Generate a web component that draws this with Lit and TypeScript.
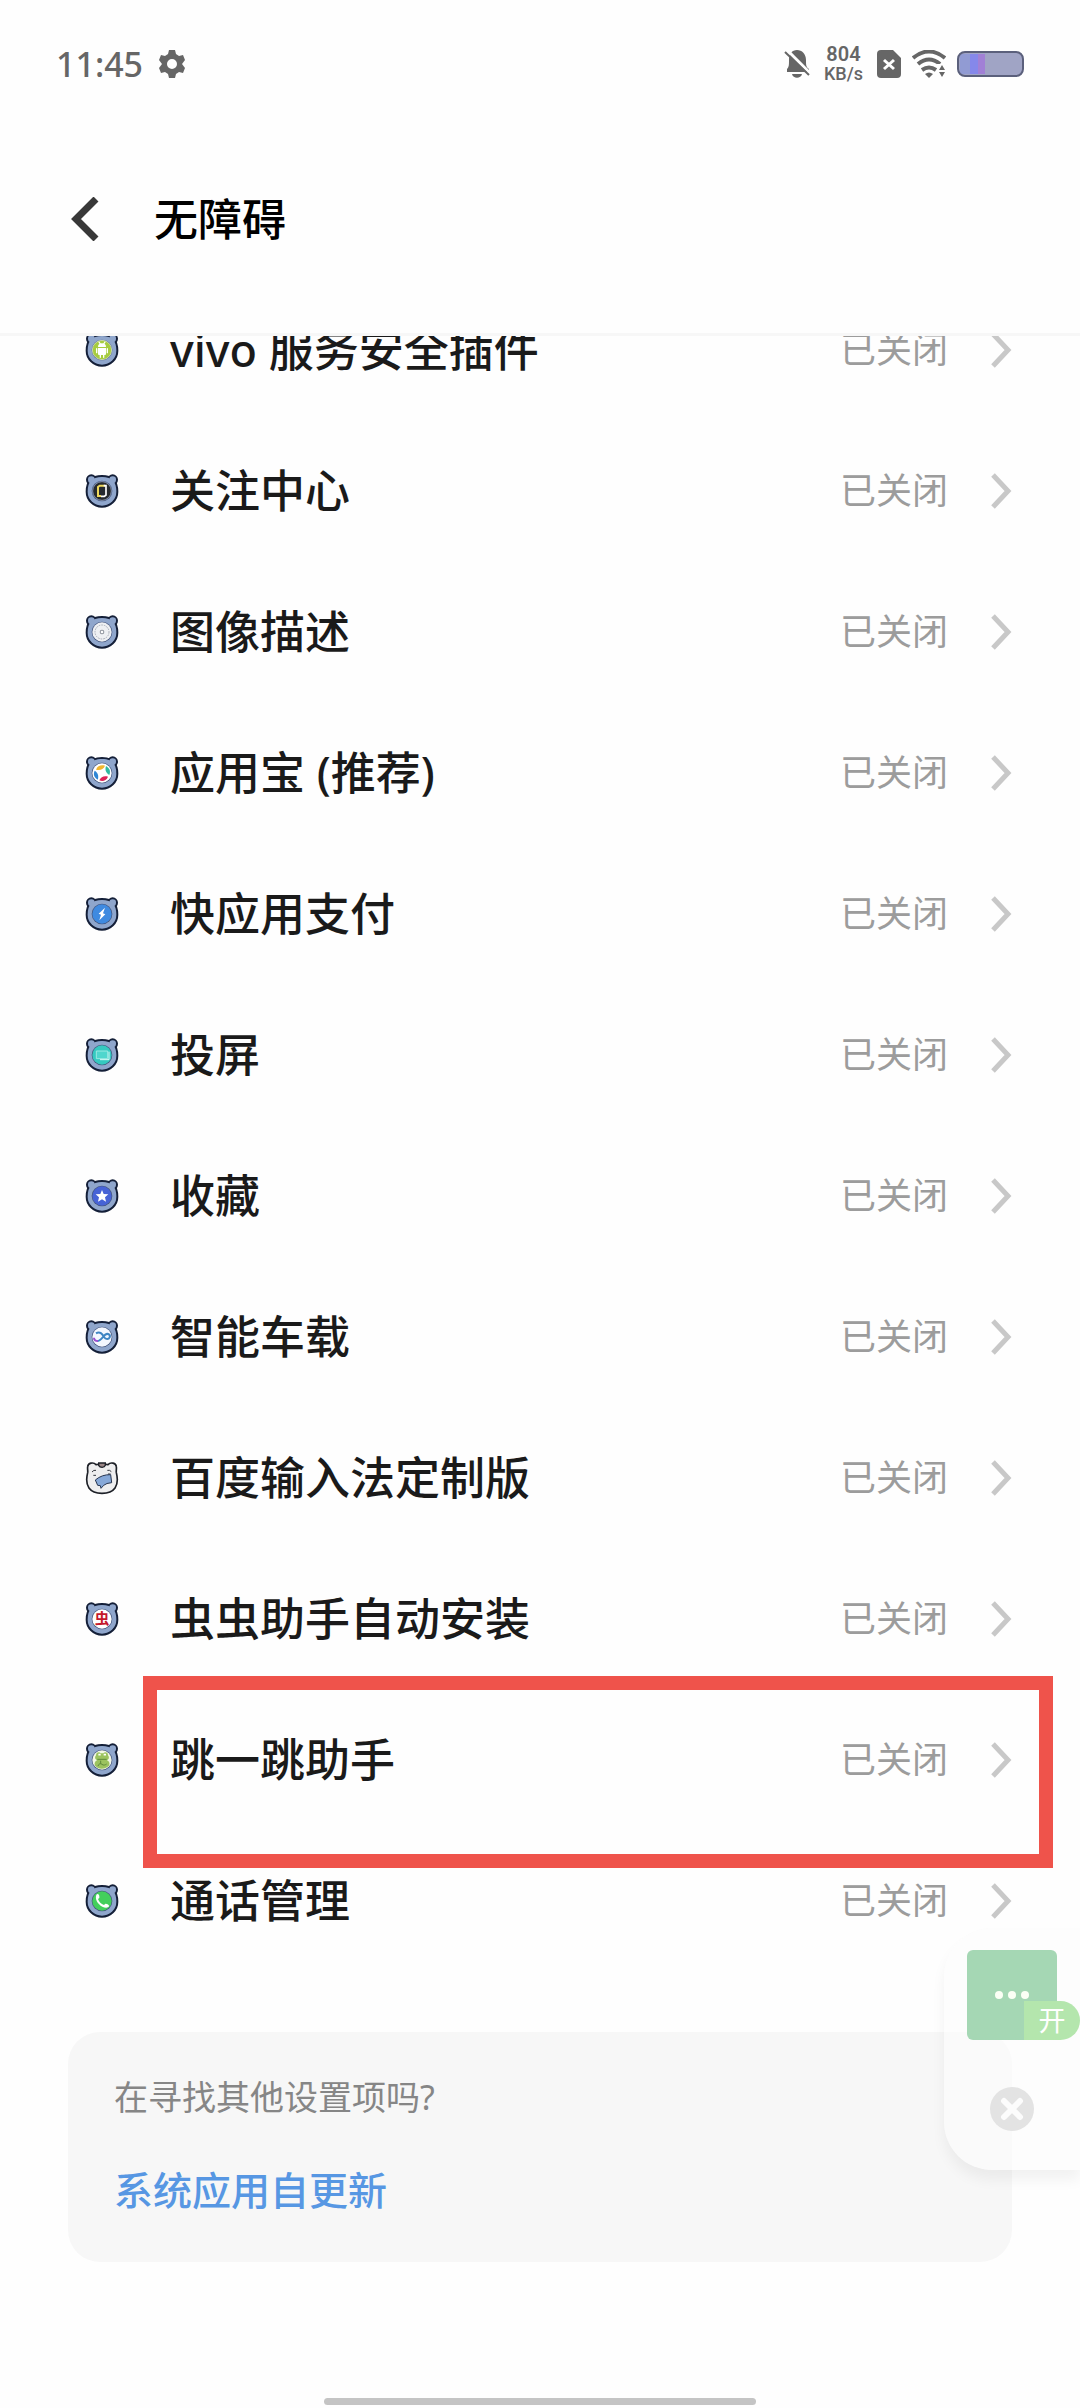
import { LitElement, html, css, svg } from 'lit';
import { customElement, property } from 'lit/decorators.js';

const ICONS: Record<string, unknown> = {
  android: svg`
    <circle cx="48" cy="48" r="29" fill="#a6cc3e" stroke="#eef6d8" stroke-width="2" />
    <path d="M36 39a12 11 0 0 1 24 0zM36 42h24v18a3 3 0 0 1-3 3H39a3 3 0 0 1-3-3z" fill="#fff" />
    <path d="M32 44v12M64 44v12M43 62v8M53 62v8M39 24l4 6M57 24l-4 6" stroke="#fff" stroke-width="4" stroke-linecap="round" />`,
  focus: svg`
    <circle cx="48" cy="48" r="28" fill="#262a2e" stroke="#aab6cf" stroke-width="2" />
    <path d="M45 63H36V36l5-4h16" fill="none" stroke="#f0d95c" stroke-width="6" />
    <path d="M53 32h7v28l-5 4H45" fill="none" stroke="#fff" stroke-width="5" />`,
  image: svg`
    <circle cx="48" cy="48" r="29" fill="#eef0f3" />
    <circle cx="48" cy="48" r="21" fill="none" stroke="#a9aeb8" stroke-width="3" stroke-dasharray="5 3" />
    <rect x="43" y="43" width="10" height="10" rx="2" fill="#fff" stroke="#8d929c" stroke-width="3" />`,
  store: svg`
    <circle cx="48" cy="48" r="29" fill="#fff" />
    <path d="M30 38c5-13 16-15 27-12-5 12-15 15-27 12z" fill="#f2b62f" />
    <path d="M60 27c12 7 14 17 10 27-10-6-14-15-10-27z" fill="#2fb9a0" />
    <path d="M66 59c-5 12-16 15-26 11 5-11 15-15 26-11z" fill="#dd2457" />
    <path d="M35 68c-11-7-14-17-9-27 10 6 13 16 9 27z" fill="#2e86d6" />`,
  quick: svg`
    <circle cx="48" cy="48" r="29" fill="#3f8ae0" />
    <path d="M57 29 38 47l7 3-5 17 18-18-7-3z" fill="#fff" />`,
  cast: svg`
    <circle cx="48" cy="48" r="29" fill="#35c9c0" />
    <path d="M31 36h34v23H31z" fill="#4fd6cd" stroke="#9be9e3" stroke-width="3" />
    <path d="M42 62h27V38" fill="none" stroke="#d9fbf7" stroke-width="3" />`,
  star: svg`
    <circle cx="48" cy="48" r="29" fill="#4763d6" />
    <path d="m48 30 5 12 14 1-10 9 3 13-12-7-12 7 3-13-10-9 14-1z" fill="#fff" />`,
  car: svg`
    <circle cx="48" cy="48" r="29" fill="#f4f8ff" />
    <path d="M30 37c12-8 19 3 24 11s14 8 17 1-5-14-13-8-14 19-24 19" fill="none" stroke="#3f86c4" stroke-width="6" />
    <path d="M36 60c-7 0-12-4-12-10" fill="none" stroke="#9a4fd0" stroke-width="6" />`,
  worm: svg`
    <circle cx="48" cy="48" r="29" fill="#fff" />
    <text x="48" y="64" text-anchor="middle" font-size="44" font-weight="700" fill="#c4182c">虫</text>`,
  frog: svg`
    <circle cx="48" cy="48" r="29" fill="#f3f8e6" />
    <path d="M30 34c0-9 10-12 14-6h8c5-6 15-2 14 6 5 6 3 12-3 15 8 4 9 10 6 16-12 12-32 12-42 0-3-6-1-12 6-16-6-3-8-9-3-15z" fill="#9cc35f" />
    <path d="M34 46h28M44 50v9M36 66c2-7 8-9 12-5s10 2 14-1" fill="none" stroke="#5f8a3c" stroke-width="3" />
    <path d="M37 32h7M53 32h7" stroke="#fff" stroke-width="5" />`,
  phone: svg`
    <circle cx="48" cy="48" r="29" fill="#43cf5c" />
    <path d="M31 29c4-4 8-1 9 4v6l-4 3c3 9 9 15 18 18l4-4c8 1 12 4 11 8-4 6-12 5-20 1C35 57 26 42 31 29z" fill="#fff" />`,
};

const SERVICES = [
  { name: 'vivo 服务安全插件', icon: 'android' },
  { name: '关注中心', icon: 'focus' },
  { name: '图像描述', icon: 'image' },
  { name: '应用宝 (推荐)', icon: 'store' },
  { name: '快应用支付', icon: 'quick' },
  { name: '投屏', icon: 'cast' },
  { name: '收藏', icon: 'star' },
  { name: '智能车载', icon: 'car' },
  { name: '百度输入法定制版', icon: 'baidu' },
  { name: '虫虫助手自动安装', icon: 'worm' },
  { name: '跳一跳助手', icon: 'frog', marked: true },
  { name: '通话管理', icon: 'phone' },
];

@customElement('bear-icon')
export class BearIcon extends LitElement {
  @property() name = '';

  static styles = css`
    :host {
      display: block;
      width: 34px;
      height: 34px;
    }

    svg {
      display: block;
      width: 100%;
      height: 100%;
      font-family: 'Noto Sans CJK SC', sans-serif;
    }
  `;

  render() {
    if (this.name === 'baidu') {
      return html`
        <svg viewBox="-3 -3 102 102" aria-hidden="true">
          <path
            d="M5 14C6 3 22-1 30 8q18-4 36 0c8-9 24-5 25 6 1 7-1 12 0 18 10 40-6 62-43 62S-5 72 5 32c1-6-1-11 0-18z"
            fill="#eeeeef" stroke="#1d2027" stroke-width="5"
          />
          <path d="M38 3h20v7c-3 8-16 8-20 0z" fill="#9b8787" stroke="#1d2027" stroke-width="4" />
          <path d="M18 30q5-7 12-5M64 25q7-2 12 4M22 40h8M66 36h8" fill="none" stroke="#33363d" stroke-width="3" />
          <path
            d="M28 54q20-17 46-16l3 24q-16 1-24 8l-8 9-2-8-8-1z"
            fill="#86a8d8" stroke="#26344f" stroke-width="3"
          />
        </svg>
      `;
    }
    return html`
      <svg viewBox="-3 -3 102 102" aria-hidden="true">
        <g fill="#8fa6cc" stroke="#141f38" stroke-width="8">
          <circle cx="16" cy="14" r="12" />
          <circle cx="80" cy="14" r="12" />
          <path d="M3 50C3 20 16 4 48 4s45 16 45 46a45 44 0 0 1-90 0z" />
        </g>
        <g fill="#8fa6cc">
          <circle cx="16" cy="14" r="10" />
          <circle cx="80" cy="14" r="10" />
          <path d="M5 50C5 21 17 6 48 6s43 15 43 44a43 42 0 0 1-86 0z" />
        </g>
        <circle cx="48" cy="48" r="31" fill="#44557c" />
        ${ICONS[this.name]}
      </svg>
    `;
  }
}

@customElement('status-bar')
export class StatusBar extends LitElement {
  static styles = css`
    :host {
      display: flex;
      align-items: center;
      justify-content: space-between;
      height: 128px;
      padding: 0 56px;
      color: #666;
      font-family: 'Noto Sans', sans-serif;
      font-weight: 500;
    }

    .left,
    .right {
      display: flex;
      align-items: center;
    }

    .left {
      gap: 16px;
      font-size: 34px;
    }

    .right {
      gap: 11px;
    }

    .speed {
      display: flex;
      flex-direction: column;
      align-items: center;
      margin: 0 3px;
      font-family: Roboto, sans-serif;
      font-size: 18px;
      line-height: 20px;
    }

    .speed b {
      font-size: 20px;
      font-weight: 600;
    }

    svg {
      display: block;
    }
  `;

  render() {
    return html`
      <div class="left">
        <time>11:45</time>
        <svg width="26" height="28" viewBox="0 0 26 28" fill="#666">
          <path
            fill-rule="evenodd"
            d="M10 0h6l1 4 3 2 4-1 2 5-3 4 3 4-2 5-4-1-3 2-1 4h-6l-1-4-3-2-4 1-2-5 3-4-3-4 2-5 4 1 3-2zM13 9a5 5 0 1 0 0 10 5 5 0 0 0 0-10z"
          />
        </svg>
      </div>
      <div class="right">
        <svg width="26" height="28" viewBox="0 0 26 28">
          <path d="M3 22v-3c2-2 2-4 2-9C5 4 8 0 13 0s9 4 9 10c0 5 0 7 3 9v3zM8 24h10c-1 5-9 5-10 0z" fill="#666" />
          <path d="M3 0 26 23" stroke="#fff" stroke-width="3" />
          <path d="m1 2 24 23" stroke="#666" stroke-width="2" />
        </svg>
        <div class="speed"><b>804</b><span>KB/s</span></div>
        <svg width="24" height="28" viewBox="0 0 24 28">
          <path d="M4 0h12l8 8v16a4 4 0 0 1-4 4H4a4 4 0 0 1-4-4V4a4 4 0 0 1 4-4z" fill="#666" />
          <path d="m7 10 10 9M17 10 7 19" stroke="#fff" stroke-width="3" />
        </svg>
        <svg width="34" height="28" viewBox="0 0 34 28" fill="none" stroke="#666" stroke-width="4">
          <path d="M1 8q16-13 32 0M6 14q11-9 22 0M10 20q7-5 14 0" />
          <path d="M13 24q4-3 8 0l-4 4z" fill="#666" stroke="none" />
          <path d="M25 14h9v14h-9z" fill="#fefefe" stroke="none" />
          <path d="m27 20 3-5 3 5zM27 22l3 5 3-5z" fill="#666" stroke="none" />
        </svg>
        <svg width="67" height="26" viewBox="0 0 67 26">
          <rect x="1" y="1" width="65" height="24" rx="7" fill="#a0a4c5" />
          <path d="M3 3h10v20H3z" fill="#919bd3" />
          <path d="M13 3h8v20h-8z" fill="#8588ea" />
          <path d="M21 3h7v20h-7z" fill="#a180d6" />
          <rect x="1" y="1" width="65" height="24" rx="7" fill="none" stroke="#5b607c" stroke-width="2" />
        </svg>
      </div>
    `;
  }
}

@customElement('app-root')
export class AppRoot extends LitElement {
  static styles = css`
    :host {
      display: flex;
      flex-direction: column;
      min-height: 100vh;
      background: #fefefe;
      color: #1a1a1a;
      font-family: 'Noto Sans', 'Noto Sans CJK SC', sans-serif;
    }

    .header {
      position: sticky;
      top: 0;
      z-index: 1;
      background: #fefefe;
      border-bottom: 3px solid #f7f7f7;
    }

    .title-bar {
      display: flex;
      align-items: center;
      gap: 54px;
      height: 205px;
      padding: 0 68px 24px;
      box-sizing: border-box;
    }

    h1 {
      margin: 0;
      color: #000;
      font-size: 44px;
      line-height: 64px;
      font-weight: 500;
    }

    button {
      display: flex;
      padding: 0;
      border: 0;
      background: none;
      font: inherit;
      cursor: pointer;
    }

    svg {
      display: block;
      flex: none;
    }

    /* the list sits scrolled a little under the header */
    .list {
      margin: -57px 0 0;
      padding: 0;
      list-style: none;
    }

    .item {
      position: relative;
    }

    .row {
      display: flex;
      align-items: center;
      height: 141px;
      padding: 0 68px 0 85px;
      color: inherit;
      text-decoration: none;
    }

    .name {
      flex: 1;
      margin-left: 51px;
      font-size: 45px;
      line-height: 64px;
      font-weight: 500;
    }

    .state {
      margin-right: 42px;
      color: #9c9c9c;
      font-size: 36px;
      line-height: 50px;
    }

    .marker {
      position: absolute;
      inset: -13px 27px -38px 143px;
      border: 14px solid #ef534b;
      pointer-events: none;
    }

    .more {
      position: relative;
      padding: 61px 68px 0;
    }

    .card {
      display: flex;
      flex-direction: column;
      align-items: flex-start;
      gap: 36px;
      padding: 40px 46px;
      border-radius: 32px;
      background: #f7f7f7;
    }

    .card p {
      margin: 0;
      color: #868686;
      font-size: 34px;
      line-height: 50px;
    }

    .card a {
      color: #5797e3;
      font-size: 39px;
      line-height: 64px;
      font-weight: 500;
      text-decoration: none;
    }

    .float {
      position: absolute;
      top: -43px;
      right: 0;
      display: flex;
      flex-direction: column;
      align-items: flex-start;
      gap: 46px;
      width: 136px;
      height: 242px;
      padding: 22px 0 0 23px;
      box-sizing: border-box;
      border-radius: 48px 0 0 48px;
      background: rgba(252, 252, 252, 0.6);
      box-shadow: 0 10px 14px rgba(0, 0, 0, 0.05);
    }

    .bubble {
      position: relative;
      align-items: center;
      justify-content: center;
      width: 90px;
      height: 90px;
      border-radius: 6px;
      background: #a5d7b4;
    }

    .on {
      position: absolute;
      right: -23px;
      bottom: 0;
      width: 56px;
      height: 39px;
      border-radius: 0 20px 20px 0;
      background: #b4e6ad;
      color: #fff;
      font-size: 27px;
      line-height: 39px;
      text-align: center;
    }

    .close {
      margin-left: 22px;
    }

    .home {
      width: 40%;
      height: 7px;
      margin: auto auto 3px;
      border-radius: 4px;
      background: #c4c4c4;
    }
  `;

  render() {
    return html`
      <header class="header">
        <status-bar></status-bar>
        <div class="title-bar">
          <button aria-label="返回">
            <svg width="32" height="44" viewBox="0 0 32 44" fill="none" stroke="#383838" stroke-width="7">
              <path d="M28 2 8 22l20 20" />
            </svg>
          </button>
          <h1>无障碍</h1>
        </div>
      </header>
      <ul class="list">
        ${SERVICES.map(s => this._row(s))}
      </ul>
      <section class="more">
        <div class="card">
          <p>在寻找其他设置项吗?</p>
          <a href="#update">系统应用自更新</a>
        </div>
        <div class="float">
          <button class="bubble" aria-label="更多">
            <svg width="36" height="10" viewBox="0 0 36 10" fill="#fbfff5">
              <circle cx="5" cy="5" r="4" />
              <circle cx="18" cy="5" r="4" />
              <circle cx="31" cy="5" r="4" />
            </svg>
            <span class="on">开</span>
          </button>
          <button class="close" aria-label="关闭">
            <svg width="46" height="46" viewBox="0 0 46 46">
              <circle cx="23" cy="23" r="22" fill="#e3e3e3" />
              <path d="m15 15 16 16M31 15 15 31" stroke="#fcfcfc" stroke-width="6" stroke-linecap="round" />
            </svg>
          </button>
        </div>
      </section>
      <div class="home"></div>
    `;
  }

  _row(s: { name: string; icon: string; marked?: boolean }) {
    return html`
      <li class="item">
        <a class="row" href="#${s.icon}">
          <bear-icon name=${s.icon}></bear-icon>
          <span class="name">${s.name}</span>
          <span class="state">已关闭</span>
          <svg width="22" height="36" viewBox="0 0 22 36" fill="none" stroke="#c8c8c8" stroke-width="5">
            <path d="m3 2 15 16L3 34" />
          </svg>
        </a>
        ${s.marked ? html`<div class="marker"></div>` : ''}
      </li>
    `;
  }
}
